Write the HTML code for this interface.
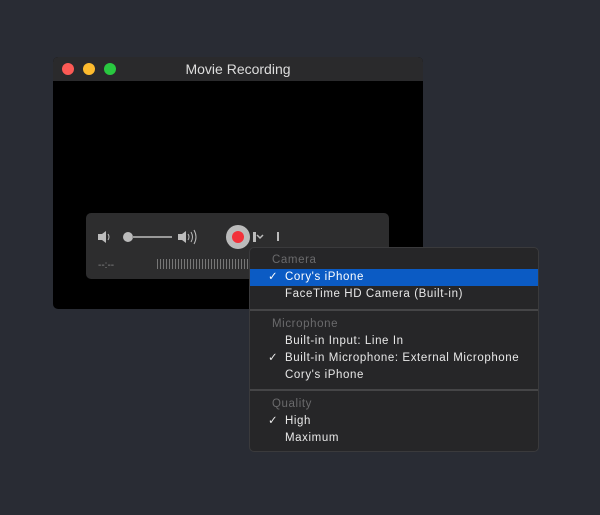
<!DOCTYPE html>
<html><head><style>
body{margin:0;width:600px;height:515px;background:#292c34;position:relative;overflow:hidden;font-family:"Liberation Sans",sans-serif}
.win{position:absolute;left:53px;top:57px;width:370px;height:252px;background:#000;border-radius:5px;overflow:hidden}
.tb{height:24px;background:#2a2a2c;color:#ddd;font-size:14px;text-align:center;line-height:24px}
.dot{position:absolute;top:6px;width:12px;height:12px;border-radius:50%}
.ctl{position:absolute;left:33px;top:156px;width:303px;height:66px;background:#2d2d2e;border-radius:5px}
.menu{position:absolute;left:249px;top:247px;width:288px;height:203px;background:#262628;border:1px solid #3a3a3c;border-radius:5px;font-size:11.5px;color:#e8e8e8;letter-spacing:.6px}
.r{position:absolute;left:0;right:0;height:17px;line-height:17px;padding-left:35px}
.h{color:#6a6a6c}
.sel{background:#0b5bc4;color:#fff}
.ck{position:absolute;left:18px}
.sep{position:absolute;left:0;right:0;height:2px;background:#454547}
</style></head><body>
<div class="win">
<div class="tb">Movie Recording</div>
<div class="dot" style="left:9px;background:#fc5a55"></div>
<div class="dot" style="left:30px;background:#fdbb2e"></div>
<div class="dot" style="left:51px;background:#29c840"></div>
<div class="ctl">
<svg width="303" height="66" style="position:absolute;left:0;top:0">
<g fill="#bbb"><rect x="12" y="21" width="4" height="6"/><path d="M16 21 L20 18 L20 30 L16 27Z"/></g>
<path d="M22 21 Q24 24 22 27" stroke="#bbb" fill="none"/>
<circle cx="42" cy="24" r="5" fill="#bbb"/><rect x="46" y="23" width="40" height="2" fill="#999"/>
<g fill="#bbb"><rect x="92" y="21" width="4" height="6"/><path d="M96 21 L100 18 L100 30 L96 27Z"/></g>
<path d="M102 21 Q104 24 102 27 M105 19 Q108 24 105 29 M108 17 Q112 24 108 31" stroke="#bbb" fill="none"/>
<circle cx="152" cy="24" r="12" fill="#bbb"/><circle cx="152" cy="24" r="6" fill="#f2313a"/>
<rect x="167" y="19" width="3" height="10" fill="#bbb"/><path d="M171 22 l3 3 l3-3" stroke="#bbb" fill="none" stroke-width="1.5"/>
<rect x="191" y="19" width="2" height="9" fill="#bbb"/>
<text x="12" y="55" fill="#888" font-size="10" font-family="Liberation Sans">--:--</text>
<g stroke="#777" stroke-width="1">
<path d="M71.5 46v10M74.5 46v10M77.5 46v10M80.5 46v10M83.5 46v10M86.5 46v10M89.5 46v10M92.5 46v10M95.5 46v10M98.5 46v10M101.5 46v10M104.5 46v10M107.5 46v10M110.5 46v10M113.5 46v10M116.5 46v10M119.5 46v10M122.5 46v10M125.5 46v10M128.5 46v10M131.5 46v10M134.5 46v10M137.5 46v10M140.5 46v10M143.5 46v10M146.5 46v10M149.5 46v10M152.5 46v10M155.5 46v10M158.5 46v10M161.5 46v10"/></g>
</svg>
</div>
</div>
<div class="menu">
<div class="r h" style="top:4px;padding-left:22px">Camera</div>
<div class="r sel" style="top:21px"><span class="ck">✓</span>Cory's iPhone</div>
<div class="r" style="top:38px">FaceTime HD Camera (Built-in)</div>
<div class="sep" style="top:61px"></div>
<div class="r h" style="top:68px;padding-left:22px">Microphone</div>
<div class="r" style="top:85px">Built-in Input: Line In</div>
<div class="r" style="top:102px"><span class="ck">✓</span>Built-in Microphone: External Microphone</div>
<div class="r" style="top:119px">Cory's iPhone</div>
<div class="sep" style="top:141px"></div>
<div class="r h" style="top:148px;padding-left:22px">Quality</div>
<div class="r" style="top:165px"><span class="ck">✓</span>High</div>
<div class="r" style="top:182px">Maximum</div>
</div>
</body></html>
